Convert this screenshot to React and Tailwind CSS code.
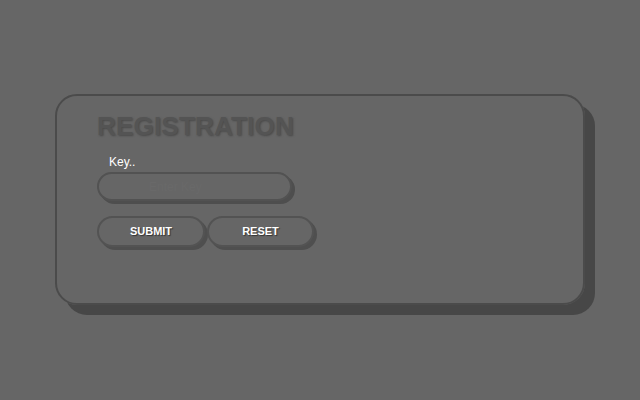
export default function App() {
  return (
    <div
      className="w-[640px] h-[400px] bg-[#666666] overflow-hidden flex flex-col"
      style={{ fontFamily: '"Liberation Sans", Arial, sans-serif' }}
    >
      <div className="ml-[55px] mt-[94px] w-[530px] h-[211px] border-2 border-[#4b4b4b] rounded-[22px] shadow-[10px_10px_0_#474747] flex flex-col pl-[40px] pt-[17px]">
        <h1 className="text-[26px] leading-[26px] font-bold text-[#545454] [text-shadow:1px_1px_2px_#4a4a4a] tracking-[0.2px]">
          REGISTRATION
        </h1>
        <label className="mt-[16px] ml-[12px] text-[12px] leading-[14px] text-white">
          Key..
        </label>
        <input
          type="text"
          placeholder="Enter Key"
          className="mt-[3px] w-[195px] h-[29px] rounded-full border-2 border-[#525252] bg-[#666666] shadow-[3px_3px_0_#4e4e4e] px-[50px] text-[12px] text-white placeholder:text-[#696969] outline-none"
        />
        <div className="mt-[15px] flex gap-[2px]">
          <button className="w-[108px] h-[31px] rounded-full border-2 border-[#535353] bg-[#666666] shadow-[3px_3px_0_#4f4f4f] text-[11px] font-bold text-white [text-shadow:1px_1px_1px_#333]">
            SUBMIT
          </button>
          <button className="w-[107px] h-[31px] rounded-full border-2 border-[#535353] bg-[#666666] shadow-[3px_3px_0_#4f4f4f] text-[11px] font-bold text-white [text-shadow:1px_1px_1px_#333]">
            RESET
          </button>
        </div>
      </div>
    </div>
  );
}
